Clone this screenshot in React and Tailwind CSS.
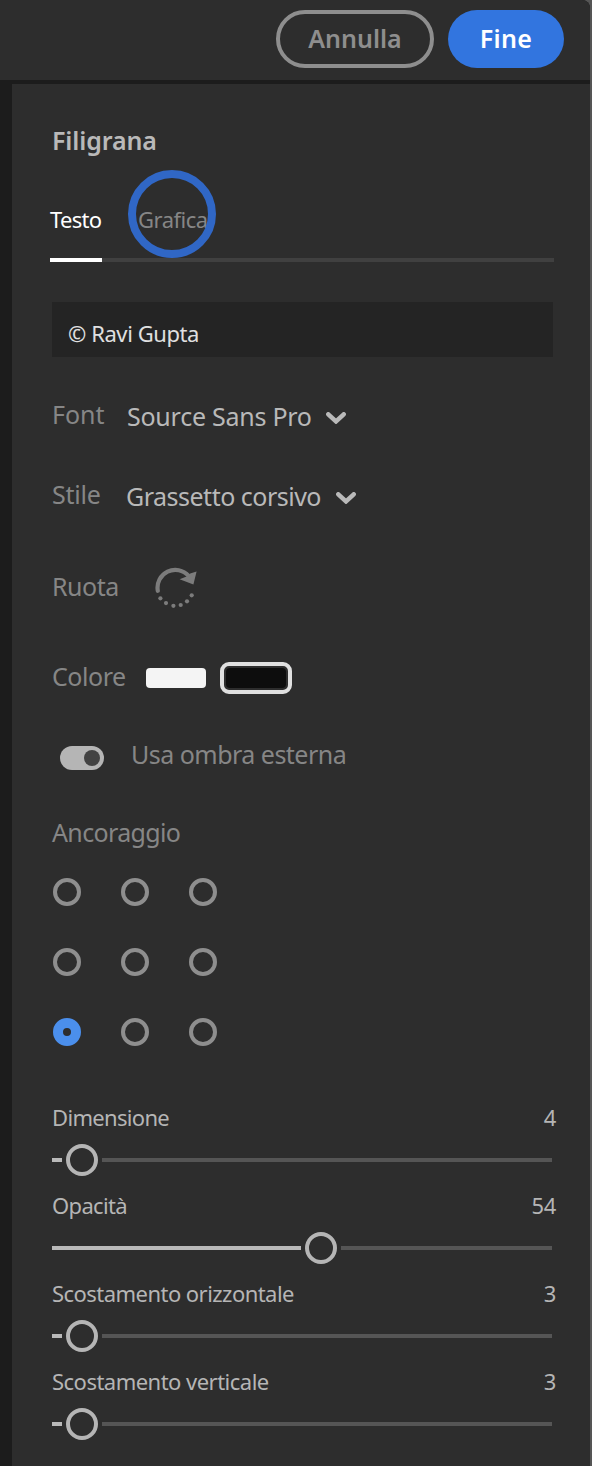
import React, { useState } from 'react';

const sliders = [
  { name: 'Dimensione', value: 4, offset: 14, tracking: 'tracking-[-0.68px]' },
  { name: 'Opacità', value: 54, offset: 253, tracking: 'tracking-[-0.65px]' },
  { name: 'Scostamento orizzontale', value: 3, offset: 14, tracking: 'tracking-[-0.54px]' },
  { name: 'Scostamento verticale', value: 3, offset: 14, tracking: 'tracking-[-0.52px]' },
];

const ChevronIcon = ({ className }) => (
  <svg className={className} width="20" height="12" viewBox="0 0 20 12" fill="none">
    <path d="M2.3 2.3 10 9.4l7.7-7.1" stroke="currentColor" strokeWidth="4.5" strokeLinecap="round" strokeLinejoin="miter" />
  </svg>
);

const RotateIcon = () => (
  <svg width="42" height="42" viewBox="0 0 42 42" className="text-[#7c7c7c]">
    <path d="M2.8 23.8A17.8 17.8 0 0 1 33.6 8.8" fill="none" stroke="currentColor" strokeWidth="4.2" strokeLinecap="round" />
    <path d="M41.6 4.4 38.4 17.6 24.6 12.2 31.6 9.4 35.2 6.6Z" fill="currentColor" />
    <g fill="currentColor">
      <circle cx="5.4" cy="31.3" r="2.1" />
      <circle cx="11" cy="36.1" r="2.1" />
      <circle cx="18.4" cy="38.8" r="2.1" />
      <circle cx="25.7" cy="38" r="2.1" />
      <circle cx="32" cy="34.3" r="2.1" />
      <circle cx="36.7" cy="28.3" r="2.1" />
    </g>
  </svg>
);

const Slider = ({ name, value, offset, tracking }) => (
  <div>
    <div className="flex items-center justify-between w-[504px] h-[35px] text-[22px] text-[#b5b5b5]">
      <span className={tracking}>{name}</span>
      <span className="tracking-[-0.3px]">{value}</span>
    </div>
    <div className="flex items-center w-[500px] h-8 mt-[9px]">
      <div className="h-1 bg-[#b9b9b9]" style={{ width: offset - 4 }} />
      <div className="shrink-0 size-8 mx-1 rounded-full border-4 border-[#b5b5b5]" />
      <div className="flex-1 h-1 bg-[#555555]" />
    </div>
  </div>
);

const App = () => {
  const [anchor, setAnchor] = useState(6);

  return (
    <div className="w-[592px] h-[1466px] overflow-hidden bg-[#555555] font-['Noto_Sans',sans-serif] whitespace-nowrap">
      <div className="flex flex-col w-[590px] h-full bg-[#1c1c1c] rounded-tr-lg overflow-hidden">
        {/* Header */}
        <div className="flex items-center justify-end gap-3.5 h-20 pr-[26px] pb-0.5 bg-[#2d2d2d] text-[25px] font-semibold">
          <button className="w-[158px] h-[58px] rounded-full border-4 border-[#8e8e8e] text-[#8e8e8e]">Annulla</button>
          <button className="w-[116px] h-[58px] rounded-full bg-[#3275df] text-white tracking-[0.3px]">Fine</button>
        </div>

        {/* Panel */}
        <div className="flex-1 mt-1 ml-3 pl-10 pt-[39px] bg-[#2d2d2d] text-[25px] text-[#868686]">
          <h2 className="h-[34px] leading-[34px] font-semibold text-[#b9b9b9] tracking-[-0.12px]">Filigrana</h2>

          {/* Tabs */}
          <div className="flex items-start gap-9 w-[504px] h-[60px] mt-[45px] -ml-0.5 border-b-4 border-[#404040] text-[22px] leading-[35px]">
            <button className="w-[52px] h-[60px] pb-[21px] border-b-4 border-white text-left text-white tracking-[-0.7px]">Testo</button>
            <div className="relative">
              <button className="tracking-[-0.5px]">Grafica</button>
              <div className="absolute -left-2.5 -top-8 size-[88px] rounded-full border-8 border-[#3067c6]" />
            </div>
          </div>

          <div className="flex items-center w-[501px] h-[55px] mt-10 pl-4 pt-2 bg-[#242424] text-[22px] text-[#e0e0e0] tracking-[-0.42px]">
            © Ravi Gupta
          </div>

          {/* Font and style */}
          <div className="flex items-center h-9 mt-10">
            <span className="w-[75px]">Font</span>
            <button className="flex items-center pt-1 text-[#b9b9b9]">
              <span className="w-[199px] text-left tracking-[-0.25px]">Source Sans Pro</span>
              <ChevronIcon className="mt-0.5" />
            </button>
          </div>
          <div className="flex items-center h-9 mt-11">
            <span className="w-[74px] tracking-[-0.2px]">Stile</span>
            <button className="flex items-center pt-1 text-[#b9b9b9]">
              <span className="w-[210px] text-left tracking-[-0.5px]">Grassetto corsivo</span>
              <ChevronIcon className="mt-0.5" />
            </button>
          </div>

          <div className="flex items-center h-[42px] mt-[54px]">
            <span className="w-[103px] pb-0.5 tracking-[-0.5px]">Ruota</span>
            <RotateIcon />
          </div>

          {/* Colors */}
          <div className="flex items-center h-8 mt-[53px]">
            <span className="w-[94px] pb-0.5 tracking-[-0.45px]">Colore</span>
            <div className="w-[60px] h-5 rounded bg-[#f4f4f4]" />
            <div className="w-[72px] h-8 ml-3.5 rounded-[9px] border-4 border-[#e0e0e0] bg-[#2d2d2d] p-0.5">
              <div className="h-full rounded bg-[#0d0d0d]" />
            </div>
          </div>

          <div className="flex items-center h-6 mt-[52px] pl-2">
            <div className="flex items-center justify-end w-11 h-6 pr-1 rounded-full bg-[#b5b5b5]">
              <div className="size-4 rounded-full bg-[#424242]" />
            </div>
            <span className="ml-[27px] pb-1.5 tracking-[-0.52px]">Usa ombra esterna</span>
          </div>

          {/* Anchor */}
          <div className="h-[34px] leading-[34px] mt-[45px] tracking-[-0.65px]">Ancoraggio</div>
          <div className="grid grid-cols-3 gap-x-10 gap-y-[42px] w-fit mt-[29px] ml-px">
            {[...Array(9).keys()].map((i) => (
              <button
                key={i}
                onClick={() => setAnchor(i)}
                className={`size-7 rounded-full ${
                  i === anchor ? 'border-[10px] border-[#4b8fec]' : 'border-4 border-[#8e8e8e]'
                }`}
              />
            ))}
          </div>

          {/* Sliders */}
          <div className="flex flex-col gap-3 mt-[54px]">
            {sliders.map((s) => (
              <Slider key={s.name} {...s} />
            ))}
          </div>
        </div>
      </div>
    </div>
  );
};

export default App;
